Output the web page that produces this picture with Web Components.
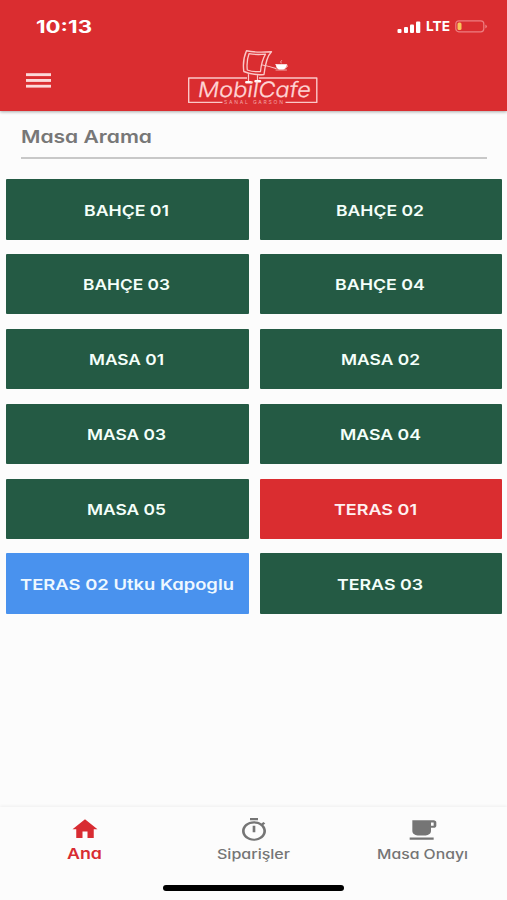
<!DOCTYPE html>
<html lang="tr">
<head>
<meta charset="utf-8">
<title>MobilCafe</title>
<style>
html,body{margin:0;height:100%}
body{background:#fcfcfc;font-family:Inter,"Open Sans",sans-serif;overflow:hidden}
</style>
</head>
<body>
<cafe-app></cafe-app>
<script>
const define = (name, render) => customElements.define(name, class extends HTMLElement {
  connectedCallback() {
    if (this.shadowRoot) return;
    this.attachShadow({ mode: 'open' }).innerHTML = render(this);
  }
});

/* Wide rounded label: the glyphs are extended to the width given in "w". */
define('wide-text', el => {
  const w = +el.getAttribute('w'), s = +(el.getAttribute('size') || 15);
  const weight = el.getAttribute('weight') || 600;
  const h = Math.round(s * 1.4);
  return `<style>
    :host{display:block;width:${w}px;height:${h}px;flex:none}
    svg{display:block;overflow:visible}
    text{font:${weight} ${s}px Inter,"Open Sans",sans-serif;font-feature-settings:"cv11" 1,"ss03" 1;fill:currentColor}
  </style><svg width="${w}" height="${h}"><text x="0" y="${h / 2 + s * .364}" textLength="${w}" lengthAdjust="spacingAndGlyphs">${el.getAttribute('text')}</text></svg>`;
});

define('status-bar', () => `<style>
  :host{display:flex;justify-content:space-between;align-items:center;height:53px;padding:0 19px 0 36px;box-sizing:border-box;color:#fff}
  .right{display:flex;align-items:center;gap:5px}
  svg{display:block}
</style>
<wide-text text="10:13" w="56" size="17" weight="700"></wide-text>
<div class="right">
  <svg width="24" height="14" fill="#fff"><rect x="0.5" y="9" width="4" height="4" rx="1"/><rect x="7" y="7" width="4" height="6" rx="1"/><rect x="13" y="4.500" width="4" height="8.500" rx="1"/><rect x="19" y="1.500" width="4.300" height="11.500" rx="1"/></svg>
  <wide-text text="LTE" w="24" size="13.500" weight="700"></wide-text>
  <svg width="33" height="13"><rect x=".8" y=".8" width="28" height="11" rx="3" fill="none" stroke="#ed7e80" stroke-width="1.200"/><rect x="2.500" y="2.500" width="4" height="7.600" rx="1.500" fill="#f7c65b"/><path d="M30.300 4.500q3.400 2 0 4z" fill="#ed7e80"/></svg>
</div>`);

define('cafe-logo', () => `<style>
  :host{display:block;width:132px;height:58px}
  svg{display:block;overflow:visible}
  .name{font:300 21px Inter,sans-serif;font-feature-settings:"cv11" 1;fill:#ffd6d6;stroke:#ffd6d6;stroke-width:.3}
  .sub{font:400 5px Inter,sans-serif;fill:#f3a3a4}
</style>
<svg width="132" height="58" viewBox="188 48 132 58" fill="none" stroke="#fbc8c8" stroke-width="1.400" stroke-linecap="round" stroke-linejoin="round">
  <path d="M247 78H188.700V102.400H222.500M285.500 102.400H316.800V78H259" stroke-linecap="butt"/>
  <path d="M246.500 50.700Q256 53 271.500 51.700Q266 57 264 74.500Q253 75.500 243.800 71.500Q242.300 60 246.500 50.700Z"/>
  <path d="M249 53.700Q256 55 265.500 54.200Q261.500 61 260.500 71.500Q253.500 72.300 247.300 70Q246.300 61 249 53.700Z" stroke-width="1.300"/>
  <path d="M248.500 74.500V81.500M257.500 75.500V80.500M262.500 65Q268 66 276 68.500" stroke-width="1.200"/>
  <path d="M246.300 82.300H250.500M255.500 81.200H260" stroke="#fff" stroke-width="2.500"/>
  <path d="M276 64.500H286.800Q286 69 283 69.300H279Q276.300 68.500 276 64.500Z" fill="#fff" stroke="#fff" stroke-width=".6"/>
  <path d="M286.500 65.300Q289.500 65.500 285.600 68M276 70H286.500M281 63Q280 61.700 281.500 60.500" stroke-width=".8"/>
  <text class="name" x="0" y="0" textLength="113" lengthAdjust="spacingAndGlyphs" transform="translate(197 96.600) skewX(-9)">MobilCafe</text>
  <text class="sub" stroke="none" x="224" y="103.800" textLength="59">SANAL GARSON</text>
</svg>`);

define('app-header', () => `<style>
  :host{display:block;height:111px;background:#da2d30;box-shadow:0 1px 3px #0005;flex:none;position:relative}
  .bar{display:grid;grid-template-columns:1fr 132px 1fr;height:58px;align-items:start;margin-top:-5px}
  .menu{display:block;margin:25px 0 0 26px}
</style>
<status-bar></status-bar>
<div class="bar"><svg class="menu" width="25" height="16" fill="#fcd9d9"><rect y=".2" width="25" height="2.900"/><rect y="6" width="25" height="2.900"/><rect y="11.800" width="25" height="2.800"/></svg><cafe-logo></cafe-logo></div>`);

define('search-field', () => `<style>
  :host{display:block;margin:0 20px 0 21px;height:48px;box-sizing:border-box;padding-top:13px;border-bottom:2px solid #c8c8c8;color:#777;flex:none}
</style><wide-text text="Masa Arama" w="131" size="17.500" weight="600"></wide-text>`);

define('table-tile', el => `<style>
  :host{display:flex;align-items:center;justify-content:center;height:60.300px;background:#245a44;color:#f4fffa;border-radius:1px;box-sizing:border-box;padding:1px 1px 0 0}
  :host([tone=busy]){background:#da2d30;color:#fff0f0;padding-right:11px}
  :host([tone=mine]){background:#4992ee;color:#eef8ff}
</style><wide-text text="${el.getAttribute('label')}" w="${el.getAttribute('w')}" size="15"></wide-text>`);

define('table-grid', () => {
  const tiles = [['BAHÇE 01', 85], ['BAHÇE 02', 88], ['BAHÇE 03', 87], ['BAHÇE 04', 90], ['MASA 01', 75], ['MASA 02', 79],
    ['MASA 03', 79], ['MASA 04', 81], ['MASA 05', 79], ['TERAS 01', 83, 'busy'], ['TERAS 02 Utku Kapoglu', 214, 'mine'], ['TERAS 03', 86]];
  return `<style>
    :host{display:grid;grid-template-columns:1fr 1fr;column-gap:11px;row-gap:14.500px;padding:20.400px 5px 0 6px;align-content:start;flex:1}
  </style>${tiles.map(([l, w, t]) => `<table-tile label="${l}" w="${w}" ${t ? `tone="${t}"` : ''}></table-tile>`).join('')}`;
});

define('nav-item', el => `<style>
  :host{display:flex;flex-direction:column;align-items:center;color:#757575;padding-top:10px}
  :host([active]){color:#d82c32;padding-top:9px}
  wide-text{margin-top:2px}
  :host([active]) wide-text{margin-top:0}
</style><slot></slot><wide-text text="${el.getAttribute('label')}" w="${el.getAttribute('w')}" size="${el.getAttribute('size')}" weight="${el.getAttribute('weight')}"></wide-text>`);

define('bottom-nav', () => `<style>
  :host{display:flex;flex-direction:column;height:93px;flex:none;background:#fcfcfc;box-shadow:0 -1px 3px #0000000e}
  nav{display:grid;grid-template-columns:repeat(3,1fr);flex:1}
  svg{display:block;flex:none}
  .home{width:181px;height:5.600px;border-radius:3px;background:#000;align-self:center;margin-bottom:9px}
</style>
<nav>
  <nav-item label="Ana" w="35" size="15" weight="600" active>
    <svg width="30" height="26.500" viewBox="0 0 24 24" preserveAspectRatio="none" fill="currentColor"><path d="M10 20v-6h4v6h5v-8h3L12 3 2 12h3v8z"/></svg>
  </nav-item>
  <nav-item label="Siparişler" w="73" size="13" weight="500">
    <svg width="32" height="26" viewBox="0 0 24 24" preserveAspectRatio="none" fill="currentColor"><path d="M15 1H9v2h6V1zm-4 13h2V8h-2v6zm8.030-6.610l1.420-1.420c-.43-.51-.9-.99-1.410-1.410l-1.420 1.420C16.070 4.740 14.120 4 12 4c-4.970 0-9 4.030-9 9s4.020 9 9 9 9-4.030 9-9c0-2.120-.74-4.070-1.970-5.610zM12 20c-3.870 0-7-3.130-7-7s3.130-7 7-7 7 3.130 7 7-3.130 7-7 7z"/></svg>
  </nav-item>
  <nav-item label="Masa Onayı" w="91" size="13" weight="500">
    <svg width="32" height="26" viewBox="0 0 24 24" preserveAspectRatio="none" fill="currentColor"><path d="M20 3H4v10c0 2.210 1.790 4 4 4h6c2.210 0 4-1.790 4-4v-3h2c1.110 0 2-.89 2-2V5c0-1.110-.89-2-2-2zm0 5h-2V5h2v3zM2 21h18v-2H2v2z"/></svg>
  </nav-item>
</nav>
<div class="home"></div>`);

define('cafe-app', () => `<style>
  :host{display:flex;flex-direction:column;width:507px;height:900px}
</style><app-header></app-header><search-field></search-field><table-grid></table-grid><bottom-nav></bottom-nav>`);
</script>
</body>
</html>
